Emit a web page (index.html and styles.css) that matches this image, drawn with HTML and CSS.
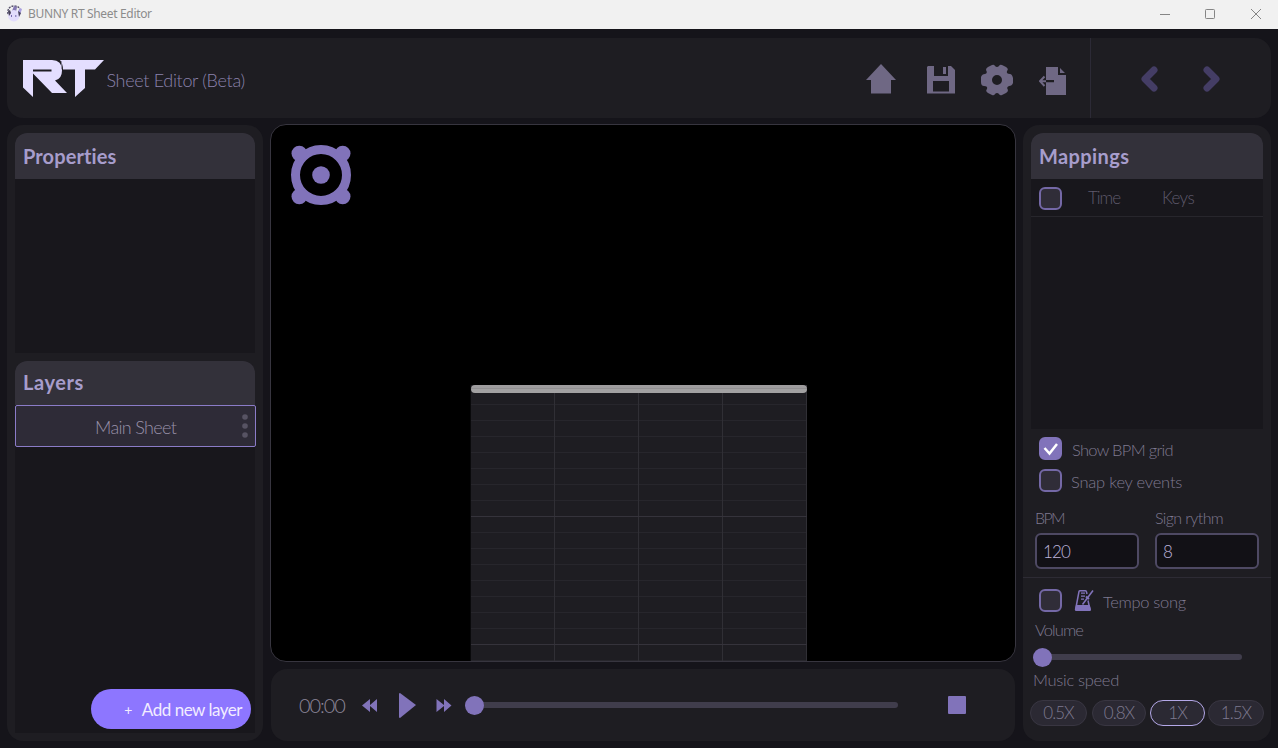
FILE: index.html
```html
<!DOCTYPE html>
<html lang="en">
<head>
<meta charset="utf-8">
<title>BUNNY RT Sheet Editor</title>
<link rel="stylesheet" href="styles.css">
</head>
<body>
<div class="titlebar">
  <svg class="app-icon" width="16" height="18" viewBox="0 0 16 18">
    <path d="M1 9C0 4 3 1 7 1s6 2 6 5" fill="none" stroke="#55506a" stroke-width="1.4" stroke-dasharray="2 1"/>
    <path d="M5 6L7 1l3 1-1 5z" fill="#8478b4"/>
    <path d="M11 6l2-3 2 1-2 6z" fill="#aaa0e0"/>
    <circle cx="6.8" cy="10.7" r="5.7" fill="#e2dcfc"/>
    <path d="M1 6l2-1 1 3-2 3zM11 6l3 2-2 4z" fill="#45405a"/>
    <path d="M4.5 10v2M8.800 10v2" stroke="#776bb0"/>
  </svg>
  <span class="titlebar-text">BUNNY RT Sheet Editor</span>
  <svg class="window-controls" width="106" height="14" viewBox="0 0 106 14" fill="none" stroke="#858585">
    <path d="M1 7.500h10"/><rect x="46.500" y="2.500" width="9" height="9" rx=".8"/><path d="M92 2l10 10M102 2L92 12"/>
  </svg>
</div>
<header class="topbar">
  <svg class="logo" width="82" height="38" viewBox="0 0 82 38" fill="#e4deff">
    <path d="M0 0H29Q39 0 39 10.500Q39 19 32 20.500L44 33H29L10 13.500V37L0 27.500ZM10 9.500V11.500H28.500V9.500Z" fill-rule="evenodd"/>
    <path d="M39 0H81L72 9.500H62V28L52 37V9.500H40Q40 4 37 0Z"/>
    <path d="M38.500 1V9" stroke="#8f89a4" stroke-width=".8"/>
  </svg>
  <span class="app-name">Sheet Editor (Beta)</span>
  <nav class="tools">
    <svg width="30" height="30" viewBox="0 0 30 30"><path d="M15 0L30 16H25V29.500H5V16H0Z"/></svg>
    <svg class="save" width="28" height="28" viewBox="0 0 28 28"><path fill-rule="evenodd" d="M1 0H7V10H21V0H24L28 4V27.500H0V1ZM6 15V25.500H22V15Z"/><path d="M16 1h3v7h-3z"/></svg>
    <svg class="gear" width="32" height="32" viewBox="0 0 32 32"><path fill-rule="evenodd" d="M11 1Q13 0 14 2Q16 4 18 2Q19 0 21 1L25 3Q28 5 26 7Q25 10 29 10Q31 10 32 14V19Q31 22 28 22Q25 23 27 26Q27 28 25 29L21 31Q19 32 18 30Q16 28 14 30Q13 32 11 31L7 29Q4 27 6 25Q7 22 3 22Q0 22 0 18V13Q1 10 4 10Q7 9 5 6Q5 4 7 3ZM16 11A5 5 0 1 0 16 21A5 5 0 1 0 16 11Z"/></svg>
    <svg class="exit" width="28" height="28" viewBox="0 0 28 28"><path d="M7 0H19V8H27V28H7V15.300H15V13H7ZM21 1L26 6H21Z"/><path d="M7 14.200H1M5.500 9.500L1 14.200L5.500 19" fill="none" stroke="#6f6884" stroke-width="2"/></svg>
  </nav>
  <div class="history">
    <svg width="18" height="26" viewBox="0 0 18 26"><path d="M13 4L4 13L13 22"/></svg>
    <svg width="18" height="26" viewBox="0 0 18 26"><path d="M5 4L14 13L5 22"/></svg>
  </div>
</header>
<main class="workspace">
  <aside class="panel">
    <section class="properties">
      <h2>Properties</h2>
    </section>
    <section class="layers">
      <h2>Layers</h2>
      <div class="layer"><span>Main Sheet</span>
        <svg width="6" height="26" viewBox="0 0 6 26" fill="#575363"><circle cx="3" cy="4" r="2.800"/><circle cx="3" cy="13" r="2.800"/><circle cx="3" cy="22" r="2.800"/></svg>
      </div>
      <button class="add-layer"><span class="plus">+</span><span>Add new layer</span></button>
    </section>
  </aside>
  <div class="center">
    <div class="stage">
      <svg class="target" width="62" height="62" viewBox="-31 -31 62 62" fill="#8173ba">
        <circle r="25.500" fill="none" stroke="#8173ba" stroke-width="9"/><circle r="8.800"/>
        <circle cx="-21.700" cy="-21.500" r="7.800"/><circle cx="21.700" cy="-21.500" r="7.800"/><circle cx="-21.700" cy="21.500" r="7.800"/><circle cx="21.700" cy="21.500" r="7.800"/>
      </svg>
      <div class="board"><div class="hit-bar"></div></div>
    </div>
    <div class="player">
      <span class="clock">00:00</span>
      <svg class="rewind" width="16" height="13" viewBox="0 0 16 13"><path d="M0 6.500L8 0V6L15 0V13L8 7V13Z"/></svg>
      <svg class="play" width="17" height="25" viewBox="0 0 17 25"><path d="M0 1Q0 0 1 0L17 12L1 25Q0 25 0 24Z"/></svg>
      <svg class="forward" width="16" height="13" viewBox="0 0 16 13"><path d="M15.500 6.500L8 0V6L.5 0V13L8 7V13Z"/></svg>
      <div class="slider seek"><i></i></div>
      <div class="stop"></div>
    </div>
  </div>
  <aside class="panel right">
    <section class="mappings">
      <h2>Mappings</h2>
      <div class="table-head"><i class="check"></i><span class="time">Time</span><span class="keys">Keys</span></div>
    </section>
    <div class="option show"><i class="check checked"><svg width="17" height="15" viewBox="0 0 17 15"><path d="M2.500 7L7.500 12.500L15 3" fill="none" stroke="#fff" stroke-width="2.500"/></svg></i><span>Show BPM grid</span></div>
    <div class="option snap"><i class="check"></i><span>Snap key events</span></div>
    <div class="fields">
      <label><span class="bpm">BPM</span><input value="120"></label>
      <label><span class="sign">Sign rythm</span><input value="8"></label>
    </div>
    <div class="option tempo"><i class="check"></i>
      <svg width="20" height="23" viewBox="0 0 20 23"><path d="M1.500 21L5 2.500Q5.200 1.800 6 1.800H11.500Q12.300 1.800 12.500 2.800L13 5M14 11.500L16 21" fill="none" stroke="#8173ba" stroke-width="1.500"/><path d="M2 16H15.800L17 20.500Q17 22 16 22H2Q.800 22 1 20.500ZM7 3.500h4v1.300H7zM7 6.500h4v1.300H7zM7 9.500h3v1.300H7z" fill="#8173ba"/><path d="M8.500 15.500L19 1.500" stroke="#8173ba" stroke-width="1.600"/><path d="M12 7.500l3 2.500" stroke="#8173ba" stroke-width="2"/></svg>
      <span>Tempo song</span></div>
    <div class="caption volume">Volume</div>
    <div class="slider gain"><i></i></div>
    <div class="caption speed">Music speed</div>
    <div class="speeds"><button class="s-half">0.5X</button><button class="s-slow">0.8X</button><button class="s-one">1X</button><button class="s-fast">1.5X</button></div>
  </aside>
</main>
</body>
</html>
```

FILE: styles.css
```css
* { box-sizing: border-box; }
body {
  margin: 0;
  width: 1278px;
  height: 748px;
  overflow: hidden;
  display: flex;
  flex-direction: column;
  background: #15141a;
  color: #7e7990;
  font: 300 17px/20px Lato, "Open Sans", sans-serif;
  font-variant-ligatures: none;
}
svg { display: block; flex: none; }
button, input { font: inherit; color: inherit; padding: 0; outline: 0; }
span { white-space: nowrap; }

.titlebar { height: 29px; flex: none; display: flex; align-items: center; padding: 0 13px 2px 7px; background: #f1f1f1; }
.titlebar-text { margin: 1px 0 0 5px; font: 400 12px/16px "Noto Sans", sans-serif; letter-spacing: -.33px; color: #8c8c8c; }
.window-controls { margin-left: auto; }

.topbar { height: 80px; flex: none; margin: 9px 7px 7px; display: flex; background: #1e1d22; border-radius: 16px; }
.logo { margin: 22px 0 0 15.500px; }
.app-name { margin: 32px 0 0 2px; font-size: 18px; letter-spacing: -.33px; color: #8b82ac; }
.tools { margin-left: auto; display: flex; align-items: flex-start; padding: 26px 23px 0 0; fill: #6f6884; }
.save { margin: 2px 0 0 31px; }
.gear { margin-left: 26px; }
.exit { margin: 3px 0 0 26px; }
.history { width: 181px; border-left: 1px solid #2c2a36; padding: 28px 0 0 50px; display: flex; gap: 43px; fill: none; stroke: #443d65; stroke-width: 7; stroke-linecap: round; stroke-linejoin: round; }

.workspace { height: 616px; flex: none; display: flex; padding: 0 7px; }
.panel { width: 256px; padding: 8px; background: #1e1d22; border-radius: 16px; display: flex; flex-direction: column; }
.panel section { background: #18171c; border-radius: 12px 12px 0 0; }
h2 { margin: 0; height: 46px; padding: 0 8px; background: #33313a; border-radius: 12px 12px 0 0; font: 700 20px/47px Lato, sans-serif; font-variant-ligatures: none; letter-spacing: .1px; color: #a79dcc; }
.properties { height: 220px; margin-bottom: 8px; }
.layers { height: 372px; display: flex; flex-direction: column; }
.layers h2 { height: 44px; line-height: 43px; letter-spacing: .6px; }
.mappings h2 { letter-spacing: .4px; }
.layer { width: 241px; height: 42px; flex: none; border: 1px solid #8b7cc8; border-radius: 2px; background: #2e2b37; display: flex; align-items: center; justify-content: flex-end; padding-right: 7px; font-size: 18px; letter-spacing: -.65px; color: #9991a9; }
.layer span { width: 82px; margin: 1px 65px 0 0; }
.add-layer { width: 160px; height: 40px; margin: auto 4px 4px auto; border: 0; border-radius: 20px; background: #8d76ff; color: #f2edff; display: flex; align-items: center; justify-content: flex-end; gap: 10px; padding: 1px 9px 0 0; font-weight: 400; letter-spacing: -.48px; }
.plus { font-size: 14px; }

.center { width: 746px; margin: -1px 7px 0; display: flex; flex-direction: column; }
.stage { height: 538px; border: 1px solid #37353f; border-radius: 16px; background: #000; overflow: hidden; display: flex; flex-direction: column; justify-content: space-between; padding: 19px 0 0 19px; }
.board { width: 337px; height: 276px; margin-left: 180px; border-left: 1px solid #09090b; background:
  linear-gradient(#35333b, #35333b) 0 131px / 100% 1px no-repeat,
  linear-gradient(#35333b, #35333b) 0 259px / 100% 1px no-repeat,
  repeating-linear-gradient(90deg, transparent 0 83px, #302f35 83px 84px),
  repeating-linear-gradient(transparent 0 15px, #27262c 15px 16px) 0 4px,
  #1e1d22; background-clip: padding-box; }
.hit-bar { height: 8px; border-radius: 4px; background: linear-gradient(#9e9c9e 0 3px, #929092 3px 4px, #a2a1a2 4px); }
.player { height: 72px; margin: 7px 1px 0; border-radius: 16px; background: #1e1d22; display: flex; align-items: center; padding-left: 28px; fill: #8173ba; }
.clock { width: 46px; font-size: 20px; letter-spacing: -1.1px; color: #8c8699; }
.rewind { margin-left: 17px; }
.play { margin-left: 21px; }
.forward { margin-left: 20px; }
.slider { height: 20px; display: flex; align-items: center; }
.slider::before { content: ""; width: 100%; height: 6px; flex: none; border-radius: 3px; background: #403d4c; }
.slider i { width: 19px; height: 19px; flex: none; margin-left: -100%; border-radius: 50%; background: #8173ba; }
.seek { width: 433px; margin-left: 13px; }
.stop { width: 18px; height: 18px; margin-left: 50px; border-radius: 1px; background: #8173ba; }

.right { width: 248px; }
.mappings { height: 296px; flex: none; }
.table-head { height: 38px; border-bottom: 1px solid #27262c; display: flex; align-items: center; padding: 1px 0 0 8px; color: #5f5a6c; }
.check { width: 23px; height: 23px; flex: none; border: 2px solid #7468a6; border-radius: 6px; background: #302d38; display: flex; align-items: center; justify-content: center; }
.checked { background: #8173ba; border-color: #8173ba; }
.time { width: 49px; margin-left: 26px; letter-spacing: -1px; }
.keys { margin-left: 25px; letter-spacing: -.6px; }
.option { height: 23px; flex: none; display: flex; align-items: center; margin: 8px 0 0 8px; }
.option span { margin: 3px 0 0 10px; font-size: 16.500px; letter-spacing: -.2px; }
.option.show span { margin-top: 2px; letter-spacing: -.7px; }
.snap { margin-top: 9px; }
.option.snap span { margin-left: 9px; }
.fields { height: 86px; flex: none; margin: 0 -8px; padding: 17px 12px 0; border-bottom: 1px solid #2d2b34; display: flex; gap: 16px; }
.fields label { width: 104px; display: flex; flex-direction: column; }
.fields label span { height: 25px; margin-top: -1px; font-size: 16px; }
.fields .bpm { letter-spacing: -1.7px; }
.fields .sign { letter-spacing: -.6px; }
.fields input { width: 104px; height: 36px; border: 2px solid #4e4963; border-radius: 6px; background: #121116; padding-left: 6px; color: #bdb4db; font-size: 17px; letter-spacing: -.8px; }
.tempo { margin-top: 11px; }
.tempo svg { margin-left: 12px; }
.option.tempo span { margin-left: 9px; letter-spacing: -.3px; }
.caption { height: 20px; flex: none; font-size: 16.500px; }
.volume { margin: 8px 0 0 4px; letter-spacing: -.9px; }
.gain { width: 209px; flex: none; margin: 7px 0 0 2px; }
.speed { margin: 3px 0 0 2px; letter-spacing: -.3px; }
.speeds { height: 26px; flex: none; display: flex; margin: 10px -8px 0 -1px; }
.speeds button { height: 26px; flex: none; border: 1px solid #393642; border-radius: 13px; background: #2b2933; font-size: 17px; letter-spacing: -1px; }
.s-half { width: 57px; }
.s-slow { width: 54px; margin-left: 5px; }
.speeds .s-one { width: 55px; margin-left: 4px; border-color: #b4a8e8; }
.s-fast { width: 56px; margin-left: 3px; }
```
